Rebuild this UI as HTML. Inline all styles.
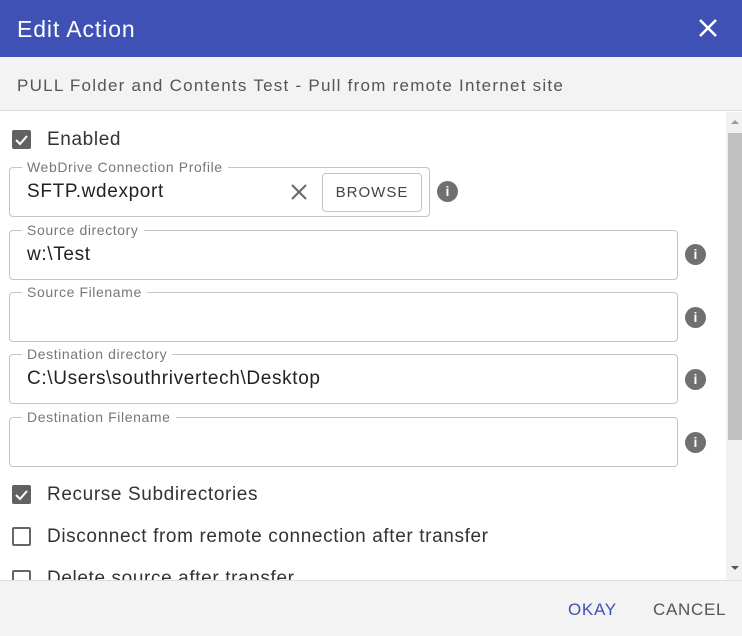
<!DOCTYPE html>
<html><head><style>
*{box-sizing:border-box;margin:0;padding:0}
body{width:742px;height:636px;overflow:hidden;background:#fff;font-family:"Liberation Sans",Arial,sans-serif;position:relative}
.hdr{position:absolute;left:0;top:0;width:742px;height:57px;background:#3f51b5;color:#fff;font-size:23px;padding:16px 0 0 17px;letter-spacing:0.9px}
.x{position:absolute;right:24px;top:18px}
.sub{position:absolute;left:0;top:57px;width:742px;height:54px;background:#f3f3f3;border-bottom:1px solid #ddd;color:#555;font-size:17px;padding:19px 0 0 17px;letter-spacing:1.25px}
.sb{position:absolute;left:726px;top:112px;width:16px;height:468px;background:#f1f1f1}
.thumb{position:absolute;left:728px;top:133px;width:14px;height:307px;background:#c1c1c1}
.cb{position:absolute;left:12px;width:19px;height:19px;border-radius:2px}
.cb.on{background:#616161}
.cb.off{border:2px solid #666}
.lbl{position:absolute;left:47px;font-size:19px;color:#333;letter-spacing:0.62px}
.f{position:absolute;left:9px;width:669px;height:50px;border:1px solid #c4c4c4;border-radius:4px}
.f .l{position:absolute;left:12px;top:-9px;background:#fff;padding:0 5px;font-size:14px;color:#777;letter-spacing:0.6px}
.f .v{position:absolute;left:17px;top:13px;font-size:19px;color:#222;letter-spacing:0.65px}
.i{position:absolute;width:21px;height:21px;border-radius:50%;background:#707070;color:#fff;font:bold 14px "Liberation Sans",sans-serif;text-align:center;line-height:21px}
.ft{position:absolute;left:0;top:580px;width:742px;height:56px;background:#f3f3f3;border-top:1px solid #ddd}
.ft span{position:absolute;top:19px;font-size:17px;letter-spacing:0.7px}
</style></head><body>
<div class="hdr">Edit Action<svg class="x" width="20" height="20" viewBox="0 0 20 20"><path d="M2 2L18 18M18 2L2 18" stroke="#fff" stroke-width="2.6"/></svg></div>
<div class="sub">PULL Folder and Contents Test - Pull from remote Internet site</div>
<div class="cb on" style="top:130px"><svg width="19" height="19"><path d="M4 10l4 4 7-8" stroke="#fff" stroke-width="2" fill="none"/></svg></div>
<div class="lbl" style="top:129px">Enabled</div>
<div class="f" style="top:167px;width:421px"><span class="l">WebDrive Connection Profile</span><span class="v">SFTP.wdexport</span>
<svg style="position:absolute;left:280px;top:15px" width="18" height="18"><path d="M2 2L16 16M16 2L2 16" stroke="#666" stroke-width="2"/></svg>
<div style="position:absolute;left:312px;top:5px;width:100px;height:39px;border:1px solid #c4c4c4;border-radius:4px;font-size:15px;color:#444;text-align:center;line-height:37px;letter-spacing:1px">BROWSE</div></div>
<div class="i" style="left:437px;top:181px">i</div>
<div class="f" style="top:230px"><span class="l">Source directory</span><span class="v">w:\Test</span></div>
<div class="i" style="left:685px;top:244px">i</div>
<div class="f" style="top:292px"><span class="l">Source Filename</span></div>
<div class="i" style="left:685px;top:307px">i</div>
<div class="f" style="top:354px"><span class="l">Destination directory</span><span class="v">C:\Users\southrivertech\Desktop</span></div>
<div class="i" style="left:685px;top:369px">i</div>
<div class="f" style="top:417px"><span class="l">Destination Filename</span></div>
<div class="i" style="left:685px;top:432px">i</div>
<div class="cb on" style="top:485px"><svg width="19" height="19"><path d="M4 10l4 4 7-8" stroke="#fff" stroke-width="2" fill="none"/></svg></div>
<div class="lbl" style="top:484px">Recurse Subdirectories</div>
<div class="cb off" style="top:527px"></div>
<div class="lbl" style="top:526px">Disconnect from remote connection after transfer</div>
<div class="cb off" style="top:570px"></div>
<div class="lbl" style="top:568px">Delete source after transfer</div>
<div class="sb"></div><div class="thumb"></div>
<svg style="position:absolute;left:730px;top:118px" width="10" height="8"><path d="M1 6L5 2L9 6Z" fill="#999"/></svg>
<svg style="position:absolute;left:730px;top:564px" width="10" height="8"><path d="M1 2L5 6L9 2Z" fill="#555"/></svg>
<div class="ft"><span style="left:568px;color:#3f51b5">OKAY</span><span style="left:653px;color:#555">CANCEL</span></div>
</body></html>
